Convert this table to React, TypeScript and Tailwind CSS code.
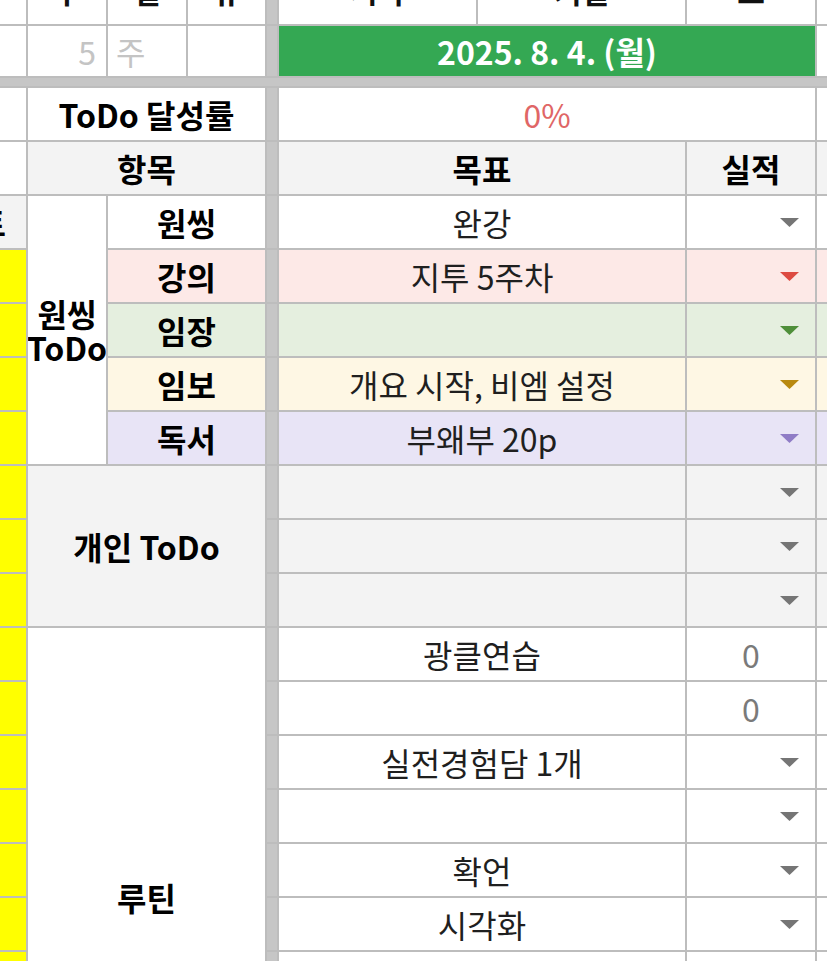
import type { ReactNode } from 'react'

type Item = { label: string; goal: string; bg: string; tri: string }

const items: Item[] = [
    { label: '원씽', goal: '완강', bg: 'bg-white', tri: '#757575' },
    { label: '강의', goal: '지투 5주차', bg: 'bg-[#fde9e7]', tri: '#dd4b42' },
    { label: '임장', goal: '', bg: 'bg-[#e5efdf]', tri: '#4f8f3a' },
    { label: '임보', goal: '개요 시작, 비엠 설정', bg: 'bg-[#fef7e4]', tri: '#b8890f' },
    { label: '독서', goal: '부왜부 20p', bg: 'bg-[#e8e4f6]', tri: '#8f7cc6' },
]

// 루틴 rows: goal text + either a count or a dropdown
const routines: { goal: string; count?: string }[] = [
    { goal: '광클연습', count: '0' },
    { goal: '', count: '0' },
    { goal: '실전경험담 1개' },
    { goal: '' },
    { goal: '확언' },
    { goal: '시각화' },
    { goal: '' },
    { goal: '' },
    { goal: '' },
    { goal: '' },
]

function Cell({ className = '', children }: { className?: string; children?: ReactNode }) {
    return (
        <div className={'flex items-center justify-center overflow-hidden whitespace-nowrap ' + className}>
            {children}
        </div>
    )
}

function Drop({ color, bg }: { color: string; bg: string }) {
    return (
        <Cell className={bg + ' justify-end pr-[16px]'}>
            <svg width="19" height="9" viewBox="0 0 19 9">
                <polygon points="0,0 19,0 9.5,9" fill={color} />
            </svg>
        </Cell>
    )
}

// cut-off header text in the first visible row
function Peek({ text, className = '' }: { text: string; className?: string }) {
    return (
        <Cell className={'bg-white items-start ' + className}>
            <span className="-mt-[26px] leading-[32px] font-bold text-[30px] text-[#111]">{text}</span>
        </Cell>
    )
}

export default function App() {
    const sep = <div className="bg-[#c6c6c6]" />

    return (
        <div className="h-[961px] w-[827px] overflow-hidden bg-white font-['Noto_Sans_CJK_KR',sans-serif] text-[32px] text-[#1f1f1f]">
            <div className="grid grid-cols-[26px_78px_78px_77px_10px_197px_207px_128px_1fr] grid-rows-[24px_50px_8px] auto-rows-[52px] gap-[2px] bg-[#bdbdbd]">
                {/* row 1: clipped headers */}
                <div className="bg-white" />
                <Peek text="주" />
                <Peek text="일" />
                <Peek text="유" />
                {sep}
                <Peek text="시작" />
                <Peek text="기필" />
                <Peek text="요" />
                <div className="bg-white" />

                {/* row 2: week + date */}
                <div className="bg-white" />
                <Cell className="bg-white justify-end pr-[10px] text-[#c4c4c4]">5</Cell>
                <Cell className="bg-white justify-start pl-[8px] text-[#c4c4c4]">주</Cell>
                <div className="bg-white" />
                {sep}
                <Cell className="col-span-3 bg-[#34a853] font-bold text-white">2025. 8. 4. (월)</Cell>
                <div className="bg-white" />

                {/* frozen separator */}
                <div className="col-span-9 bg-[#c6c6c6]" />

                {/* ToDo 달성률 */}
                <div className="bg-white" />
                <Cell className="col-span-3 bg-white font-bold text-black">ToDo 달성률</Cell>
                {sep}
                <Cell className="col-span-3 bg-white text-[#e06666]">0%</Cell>
                <div className="bg-white" />

                {/* 항목 header */}
                <div className="bg-white" />
                <Cell className="col-span-3 bg-[#f3f3f3] font-bold text-black">항목</Cell>
                {sep}
                <Cell className="col-span-2 bg-[#f3f3f3] font-bold text-black">목표</Cell>
                <Cell className="bg-[#f3f3f3] font-bold text-black">실적</Cell>
                <div className="bg-[#f3f3f3]" />

                {/* 원씽 ToDo */}
                {items.map((it, i) => (
                    <div key={it.label} className="contents">
                        {i === 0 ? (
                            <Cell className="bg-[#f3f3f3] justify-end pr-[20px]">
                                <span className="font-bold text-black">트</span>
                            </Cell>
                        ) : (
                            <div className="bg-[#ffff00]" />
                        )}
                        {i === 0 && (
                            <Cell className="row-span-5 flex-col bg-white font-bold leading-[34px] text-black">
                                <span>원씽</span>
                                <span>ToDo</span>
                            </Cell>
                        )}
                        <Cell className={'col-span-2 font-bold text-black ' + it.bg}>{it.label}</Cell>
                        {sep}
                        <Cell className={'col-span-2 ' + it.bg}>{it.goal}</Cell>
                        <Drop color={it.tri} bg={it.bg} />
                        <div className={it.bg} />
                    </div>
                ))}

                {/* 개인 ToDo */}
                {[0, 1, 2].map((i) => (
                    <div key={'p' + i} className="contents">
                        <div className="bg-[#ffff00]" />
                        {i === 0 && (
                            <Cell className="col-span-3 row-span-3 bg-[#f3f3f3] font-bold text-black">개인 ToDo</Cell>
                        )}
                        {sep}
                        <div className="col-span-2 bg-[#f3f3f3]" />
                        <Drop color="#757575" bg="bg-[#f3f3f3]" />
                        <div className="bg-[#f3f3f3]" />
                    </div>
                ))}

                {/* 루틴 */}
                {routines.map((r, i) => (
                    <div key={'r' + i} className="contents">
                        <div className="bg-[#ffff00]" />
                        {i === 0 && (
                            <Cell className="col-span-3 row-span-10 bg-white font-bold text-black">루틴</Cell>
                        )}
                        {sep}
                        <Cell className="col-span-2 bg-white">{r.goal}</Cell>
                        {r.count !== undefined ? (
                            <Cell className="bg-white text-[#7a7a7a]">{r.count}</Cell>
                        ) : (
                            <Drop color="#757575" bg="bg-white" />
                        )}
                        <div className="bg-white" />
                    </div>
                ))}
            </div>
        </div>
    )
}
